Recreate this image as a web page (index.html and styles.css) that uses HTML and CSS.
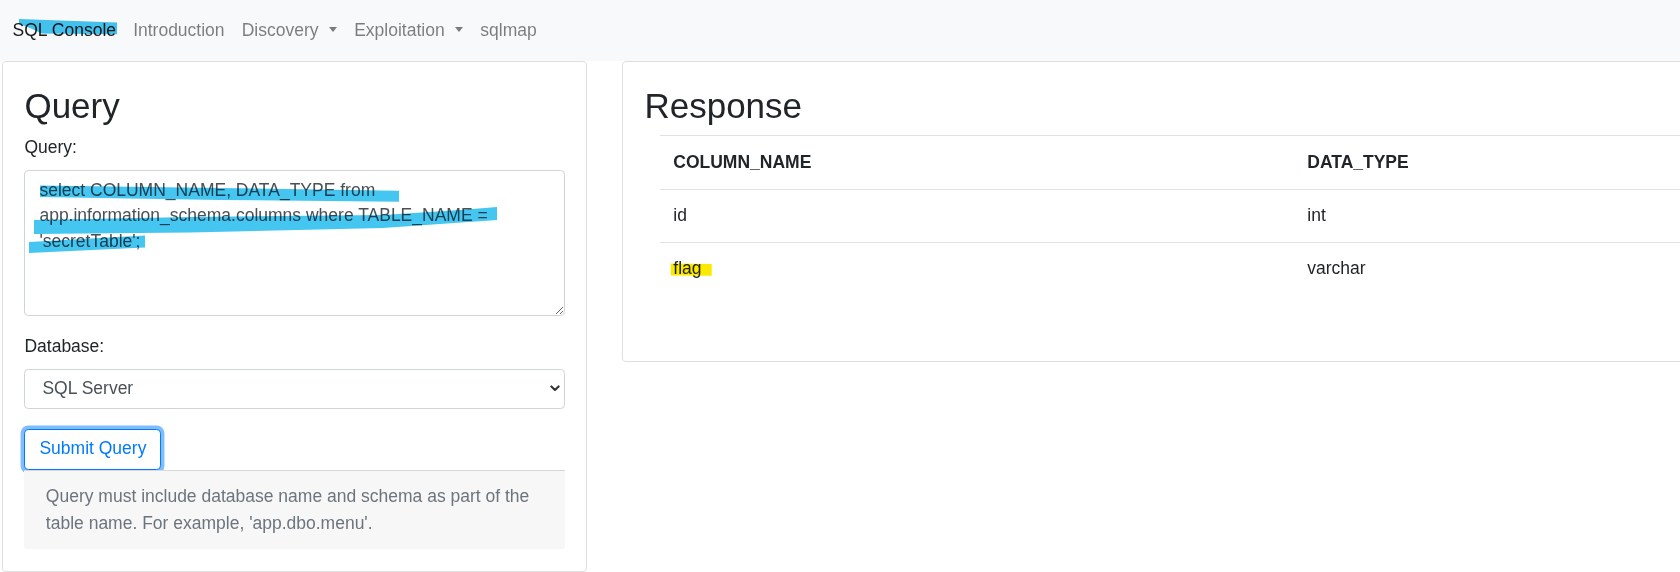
FILE: index.html
```html
<!DOCTYPE html>
<html lang="en">
<head>
<meta charset="utf-8">
<title>SQL Console</title>
<link rel="stylesheet" href="styles.css">
</head>
<body>
<nav class="navbar">
  <ul class="nav">
    <li><a class="nav-link active" href="#">SQL Console</a></li>
    <li><a class="nav-link" href="#">Introduction</a></li>
    <li><a class="nav-link dropdown-toggle" href="#">Discovery</a></li>
    <li><a class="nav-link dropdown-toggle" href="#">Exploitation</a></li>
    <li><a class="nav-link" href="#">sqlmap</a></li>
  </ul>
</nav>
<main class="layout">
  <section class="card card-query">
    <div class="card-body">
      <h1 class="title">Query</h1>
      <div class="form-group group-query">
        <label class="label" for="q">Query:</label>
        <textarea id="q" class="form-control textarea">select COLUMN_NAME, DATA_TYPE from app.information_schema.columns where TABLE_NAME = 'secretTable';</textarea>
      </div>
      <div class="form-group group-db">
        <label class="label" for="db">Database:</label>
        <div class="select-wrap">
          <select id="db" class="form-control select">
            <option>SQL Server</option>
          </select>
          <svg class="chevron" width="10" height="7" viewBox="0 0 10 7"><path d="M1.4 1.4 L5 4.9 L8.6 1.4" fill="none" stroke="#333" stroke-width="2.1" stroke-linecap="round" stroke-linejoin="round"/></svg>
        </div>
      </div>
      <button class="btn" type="button">Submit Query</button>
      <div class="help">Query must include database name and schema as part of the table name. For example, 'app.dbo.menu'.</div>
    </div>
  </section>
  <section class="card card-response">
    <div class="card-body">
      <h1 class="title">Response</h1>
      <div class="table-wrap">
        <table class="table">
          <thead>
            <tr><th class="col1">COLUMN_NAME</th><th>DATA_TYPE</th></tr>
          </thead>
          <tbody>
            <tr><td>id</td><td>int</td></tr>
            <tr><td>flag</td><td>varchar</td></tr>
          </tbody>
        </table>
      </div>
    </div>
  </section>
</main>
<svg class="marks" width="1680" height="572" viewBox="0 0 1680 572">
  <polygon class="cyan" points="19,19 117,22.5 117,34.3 42,33.5 30,28 19,24"/>
  <polygon class="cyan" points="40,185.5 220,188 399,190.7 399,201.7 220,200 40,197"/>
  <polygon class="cyan" points="34,220 190,217 383,215 460,210 497,207 497,220 383,228 190,232.5 34,234"/>
  <polygon class="cyan" points="29,242 145,235.5 145,247.5 29,253"/>
  <polygon class="yellow" points="670.7,263.5 711.7,264 711.7,275.7 670.7,275.5"/>
</svg>
</body>
</html>
```

FILE: styles.css
```css
html {
  font-size: 17.143px;
}

body {
  margin: 0;
  overflow: hidden;
  font-family: "Liberation Sans", Arial, sans-serif;
  font-size: 17.5px;
  line-height: 25.7px;
  color: #212529;
  background: #fff;
  position: relative;
  width: 1680px;
  height: 572px;
}

.navbar {
  background: #f8f9fa;
  height: 61px;
  padding: 0 4px;
  box-sizing: border-box;
}

.nav {
  list-style: none;
  margin: 0;
  padding: 0;
  display: flex;
}

.nav-link {
  display: block;
  padding: 18px 0.5rem 17.3px;
  color: rgba(0, 0, 0, 0.5);
  text-decoration: none;
}

.nav-link.active {
  color: rgba(0, 0, 0, 0.9);
}

.dropdown-toggle::after {
  content: "";
  display: inline-block;
  margin-left: 0.6em;
  vertical-align: 0.255em;
  border-top: 0.3em solid;
  border-right: 0.27em solid transparent;
  border-left: 0.27em solid transparent;
  border-bottom: 0;
}

.layout {
  display: flex;
  align-items: flex-start;
  gap: 35px;
  padding-left: 2px;
  overflow: hidden;
}

.card {
  background: #fff;
  border: 1px solid rgba(0, 0, 0, 0.125);
  border-radius: 0.25rem;
  box-sizing: border-box;
  flex-shrink: 0;
}

.card-query {
  width: 585px;
}

.card-query .card-body {
  padding-bottom: 21.4px;
}

.card-response {
  width: 1240px;
}

.card-body {
  padding: 22.7px 1.25rem 1.25rem;
}

.title {
  font-size: 35px;
  font-weight: 400;
  line-height: 42px;
  margin: 0 0 0.5rem;
}

.label {
  display: inline-block;
  margin-bottom: 8.6px;
}

.group-query {
  margin-bottom: 18.8px;
}

.group-db {
  margin-bottom: 19.8px;
}

.form-control {
  display: block;
  width: 100%;
  box-sizing: border-box;
  font-family: inherit;
  font-size: 17.5px;
  line-height: 25.7px;
  color: #495057;
  background: #fff;
  border: 1px solid #ced4da;
  border-radius: 0.25rem;
  padding: 0.375rem 0.75rem;
  margin: 0;
}

.textarea {
  height: 146px;
  padding-top: 7px;
  padding-left: 14px;
  resize: vertical;
  overflow: auto;
}

.select-wrap {
  position: relative;
}

.select {
  appearance: none;
  -webkit-appearance: none;
  height: 40.6px;
  padding-left: 17px;
}

.chevron {
  position: absolute;
  right: 5px;
  top: 16.5px;
  pointer-events: none;
}

.btn {
  display: block;
  font-family: inherit;
  font-size: 17.5px;
  line-height: 25.7px;
  color: #007bff;
  background: #fff;
  border: 1px solid #007bff;
  border-radius: 0.25rem;
  padding: 0.375rem 14px;
  box-shadow: 0 0 0 0.2rem rgba(0, 123, 255, 0.5);
  margin: 0;
}

.help {
  background: #f7f7f7;
  border-top: 1px solid rgba(0, 0, 0, 0.125);
  border-radius: 0 0 3px 3px;
  padding: 0.75rem 1.25rem;
  color: #6c757d;
  line-height: 26.5px;
}

.table-wrap {
  padding: 0 16px;
}

.table {
  width: 1160px;
  table-layout: fixed;
  border-collapse: collapse;
  margin-bottom: 44px;
  color: #212529;
}

.table th,
.table td {
  text-align: left;
  padding: 13.3px 0.75rem;
  border-top: 1px solid #dee2e6;
  vertical-align: top;
}

.table th {
  font-weight: 700;
}

.table .col1 {
  width: 634px;
  box-sizing: border-box;
}

.marks {
  position: absolute;
  left: 0;
  top: 0;
  pointer-events: none;
  mix-blend-mode: multiply;
}

.cyan {
  fill: #45c6f1;
}

.yellow {
  fill: #fbe900;
}
```
